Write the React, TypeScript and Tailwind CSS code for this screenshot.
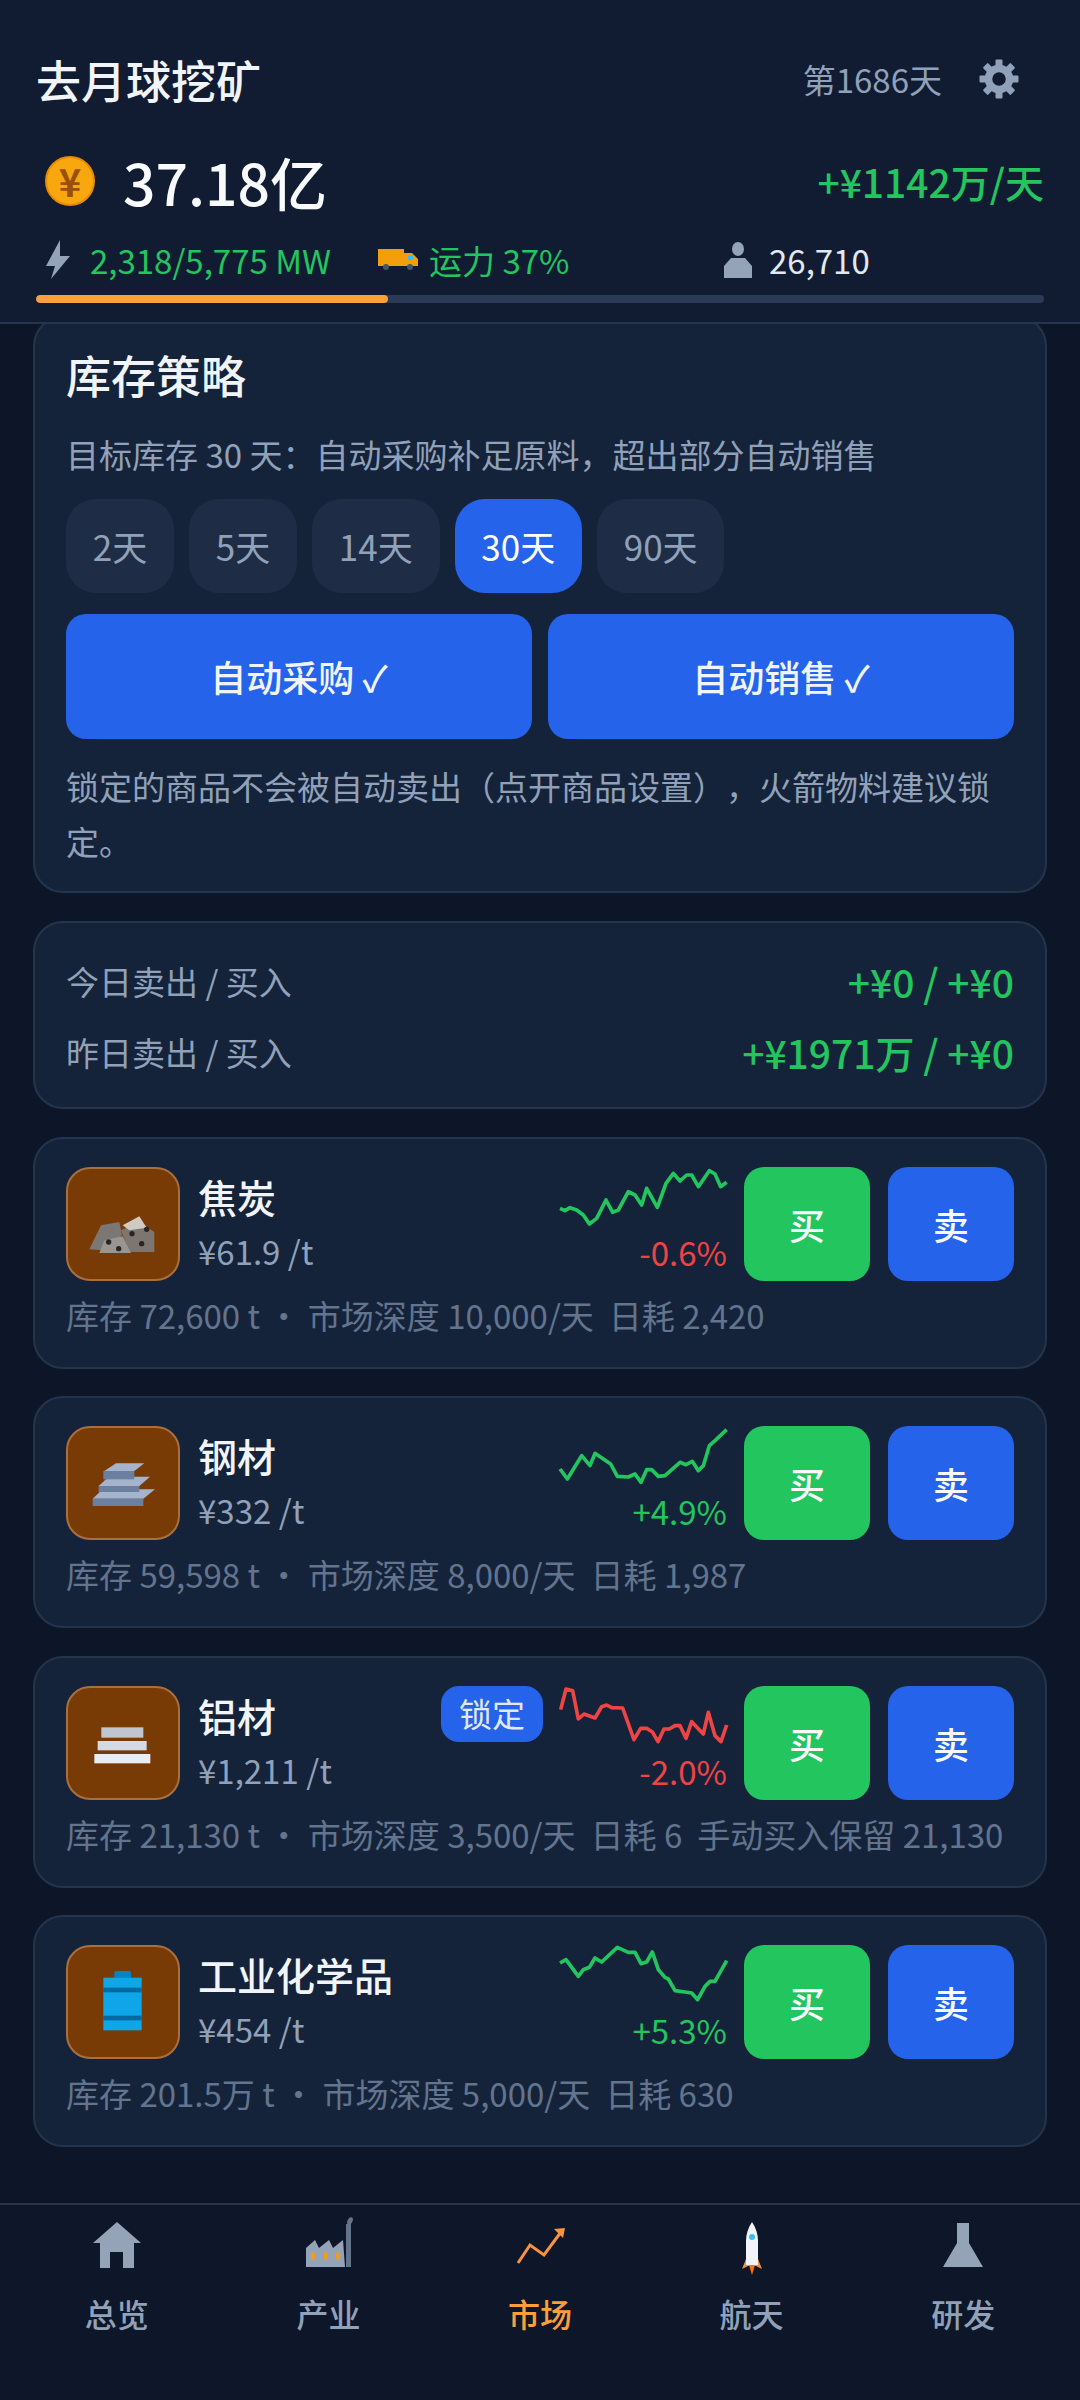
import React from 'react';

const FONT = "font-['Noto_Sans_CJK_SC','Noto_Sans',sans-serif]";

// sparkline points are in 3x px, same box on every card
const SPARK_UP_1 = '60,175 75,182 90,173 110,180 130,195 148,222 170,205 198,150 218,187 235,180 265,125 285,135 305,165 320,115 352,172 378,100 400,70 420,93 440,75 455,75 475,110 508,62 525,72 542,110 560,97';
const SPARK_UP_2 = '60,180 82,210 125,140 150,170 165,133 190,150 212,165 232,202 265,204 285,195 303,220 320,182 335,182 355,202 375,200 420,160 438,167 457,157 475,185 490,170 508,110 525,95 560,62';
const SPARK_DOWN = '62,122 78,60 98,65 115,150 132,135 165,147 185,113 200,108 215,116 248,117 282,212 302,178 320,178 338,190 354,218 372,180 388,180 405,170 420,170 438,208 455,158 490,195 505,130 525,200 543,218 560,168';
const SPARK_UP_3 = '60,105 78,95 115,145 130,125 148,118 165,90 185,102 232,58 265,73 285,73 303,107 320,102 337,72 355,125 375,148 385,153 405,188 435,192 455,195 473,215 495,175 510,160 525,160 560,98';

const CoalIcon = () => (
  <svg width="114" height="114" viewBox="80 50 342 342">
    <polygon points="150,297 185,225 240,215 248,255 190,300" fill="#7a7774" />
    <polygon points="245,240 300,215 345,245 345,305 270,305" fill="#7d7670" />
    <polygon points="180,308 195,270 250,258 275,308" fill="#9a9590" />
    <polygon points="250,225 300,198 322,232 270,240" fill="#cfcac4" />
    <circle cx="208" cy="275" r="8" fill="#292524" />
    <circle cx="238" cy="295" r="8" fill="#292524" />
    <circle cx="278" cy="250" r="8" fill="#292524" />
    <circle cx="322" cy="237" r="8" fill="#292524" />
    <circle cx="307" cy="280" r="8" fill="#292524" />
  </svg>
);

const SteelIcon = () => (
  <svg width="114" height="114" viewBox="80 50 342 342">
    <polygon points="160,268 190,240 347,240 312,268" fill="#a5b4cc" />
    <rect x="160" y="268" width="152" height="22" fill="#6b7f9e" />
    <polygon points="178,230 208,202 332,202 300,230" fill="#a5b4cc" />
    <rect x="178" y="230" width="122" height="18" fill="#6b7f9e" />
    <polygon points="195,185 230,162 315,162 285,185" fill="#a5b4cc" />
    <rect x="192" y="185" width="93" height="25" fill="#6b7f9e" />
  </svg>
);

const AluminumIcon = () => (
  <svg width="114" height="114" viewBox="80 50 342 342">
    <rect x="186" y="174" width="126" height="31" fill="#c0c6d0" />
    <rect x="175" y="215" width="147" height="28" fill="#d3dae3" />
    <rect x="165" y="254" width="168" height="28" fill="#e8edf3" />
  </svg>
);

const ChemIcon = () => (
  <svg width="114" height="114" viewBox="80 50 342 342">
    <rect x="225" y="128" width="50" height="30" rx="6" fill="#0284c7" />
    <rect x="192" y="148" width="115" height="158" fill="#0ea5e9" />
    <rect x="192" y="178" width="115" height="14" fill="#0369a1" />
    <rect x="192" y="262" width="115" height="14" fill="#0369a1" />
  </svg>
);

const GearIcon = () => (
  <svg width="40" height="40" viewBox="0 0 40 40" className="text-slate-400">
    <circle cx="20" cy="20" r="10.5" fill="none" stroke="currentColor" strokeWidth="7.5" />
    {[0, 45, 90, 135, 180, 225, 270, 315].map((deg) => (
      <rect key={deg} x="16.5" y="0.5" width="7" height="8" rx="1" fill="currentColor" transform={`rotate(${deg} 20 20)`} />
    ))}
  </svg>
);

const HouseIcon = () => (
  <svg width="60" height="60" viewBox="0 0 60 60">
    <path d="M30 7 L54 28 H47 V53 H36 V37 H23 V53 H13 V28 H6 Z" fill="#94a3b8" />
  </svg>
);

const FactoryIcon = () => (
  <svg width="60" height="60" viewBox="0 0 60 60">
    <path d="M8 52 V33 L17 25 L21 33 L31 25 L35 33 L45 25 L47 52 Z" fill="#94a3b8" />
    <rect x="48" y="9" width="5" height="43" fill="#64748b" />
    <ellipse cx="52" cy="6" rx="2.5" ry="4" fill="#64748b" transform="rotate(25 52 6)" />
    <ellipse cx="15" cy="41" rx="2" ry="4" fill="#f59e0b" />
    <ellipse cx="28" cy="41" rx="2" ry="4" fill="#f59e0b" />
    <ellipse cx="40" cy="41" rx="2" ry="4" fill="#f59e0b" />
  </svg>
);

const ChartIcon = () => (
  <svg width="60" height="60" viewBox="0 0 60 60">
    <polyline points="8,48 20,30 34,40 51,17" fill="none" stroke="#fb923c" strokeWidth="3" />
    <polygon points="44,14 55,13 53,23" fill="#fb923c" />
  </svg>
);

const RocketIcon = () => (
  <svg width="60" height="60" viewBox="0 0 60 60">
    <polygon points="24,44 20,54 26,51 34,51 40,54 36,44" fill="#fb923c" />
    <polygon points="27,50 33,50 30,60" fill="#f97316" />
    <path d="M30 7 C34 13 36 19 36 26 V50 H24 V26 C24 19 26 13 30 7 Z" fill="#f1f5f9" />
    <circle cx="30" cy="22" r="3" fill="#38bdf8" />
  </svg>
);

const FlaskIcon = () => (
  <svg width="60" height="60" viewBox="0 0 60 60">
    <polygon points="24,8 36,8 36,28 50,52 10,52 24,28" fill="#94a3b8" />
  </svg>
);

const goods = [
  { name: '焦炭', price: '¥61.9 /t', pct: '-0.6%', up: false, spark: SPARK_UP_1, line: '#22c55e', icon: <CoalIcon />, stock: '库存 72,600 t ・ 市场深度 10,000/天', extras: ['日耗 2,420'] },
  { name: '钢材', price: '¥332 /t', pct: '+4.9%', up: true, spark: SPARK_UP_2, line: '#22c55e', icon: <SteelIcon />, stock: '库存 59,598 t ・ 市场深度 8,000/天', extras: ['日耗 1,987'] },
  { name: '铝材', price: '¥1,211 /t', pct: '-2.0%', up: false, spark: SPARK_DOWN, line: '#ef4444', icon: <AluminumIcon />, locked: true, stock: '库存 21,130 t ・ 市场深度 3,500/天', extras: ['日耗 6', '手动买入保留 21,130'] },
  { name: '工业化学品', price: '¥454 /t', pct: '+5.3%', up: true, spark: SPARK_UP_3, line: '#22c55e', icon: <ChemIcon />, stock: '库存 201.5万 t ・ 市场深度 5,000/天', extras: ['日耗 630'] },
];

const days = [
  { label: '2天', active: false },
  { label: '5天', active: false },
  { label: '14天', active: false },
  { label: '30天', active: true },
  { label: '90天', active: false },
];

const tabs = [
  { label: '总览', icon: <HouseIcon />, active: false },
  { label: '产业', icon: <FactoryIcon />, active: false },
  { label: '市场', icon: <ChartIcon />, active: true },
  { label: '航天', icon: <RocketIcon />, active: false },
  { label: '研发', icon: <FlaskIcon />, active: false },
];

const Header = () => (
  <header className="h-[324px] shrink-0 border-b-2 border-[#25344d] bg-[#111c33] px-[36px] pt-[50px]">
    <div className="flex h-[60px] items-center justify-between">
      <h1 className="text-[45px] leading-[60px] font-medium text-[#f1f5f9]">去月球挖矿</h1>
      <div className="flex items-center pb-[3px]">
        <span className="text-[33px] leading-[44px] text-slate-400">第1686天</span>
        <span className="mr-[25px] ml-[37px] flex"><GearIcon /></span>
      </div>
    </div>
    <div className="mt-[31px] flex h-[80px] items-center justify-between">
      <div className="flex items-center">
        <span className="ml-[9px] flex h-[50px] w-[50px] items-center justify-center rounded-full border-2 border-[#e88a00] bg-[#f8a70f] text-[38px] leading-none font-bold text-[#9a4f0a]">¥</span>
        <span className="ml-[28px] text-[57px] leading-[80px] font-medium text-[#f8fafc]">37.18亿</span>
      </div>
      <span className="text-[39px] leading-[56px] font-medium text-[#22c55e]">+¥1142万/天</span>
    </div>
    <div className="mt-[17px] flex h-[44px] items-center text-[33px] leading-[44px]">
      <div className="flex w-[342px] items-center text-[#22c55e]">
        <svg width="34" height="40" viewBox="0 0 34 40" className="mr-[16px] ml-[4px] shrink-0">
          <polygon points="20,0 6,26 15,26 11,39 30,16 20,16" fill="#94a3b8" />
        </svg>
        2,318/5,775 MW
      </div>
      <div className="flex w-[346px] items-center text-[#22c55e]">
        <svg width="40" height="22" viewBox="0 0 40 22" className="mr-[11px] shrink-0">
          <rect x="0" y="0" width="26" height="17" fill="#f59e0b" />
          <path d="M26 4 H34 L40 10 V17 H26 Z" fill="#f59e0b" />
          <rect x="30" y="6" width="5" height="5" fill="#38bdf8" />
          <circle cx="8" cy="18" r="3" fill="#475569" />
          <circle cx="32" cy="18" r="3" fill="#475569" />
        </svg>
        运力 37%
      </div>
      <div className="flex items-center text-[#e2e8f0]">
        <svg width="28" height="36" viewBox="0 0 28 36" className="mr-[17px] shrink-0">
          <ellipse cx="14" cy="7" rx="6" ry="7" fill="#94a3b8" />
          <path d="M7 16 H21 L28 24 V36 H0 V24 Z" fill="#94a3b8" />
        </svg>
        26,710
      </div>
    </div>
    <div className="mt-[13px] h-[8px] overflow-hidden rounded-full bg-[#2a3a57]">
      <div className="h-full w-[352px] rounded-full bg-[#fb9f3c]" />
    </div>
  </header>
);

const StrategyCard = () => (
  <section className="-mt-[8px] rounded-[30px] border-2 border-[#25344d] bg-[#15233a] px-[31px] pt-[27px] pb-[22px]">
    <h2 className="text-[45px] leading-[60px] font-medium text-[#f1f5f9]">库存策略</h2>
    <p className="mt-[27px] text-[33px] leading-[44px] text-slate-400">目标库存 30 天：自动采购补足原料，超出部分自动销售</p>
    <div className="mt-[23px] flex gap-[15px]">
      {days.map((d) => (
        <button
          key={d.label}
          className={`h-[94px] rounded-[30px] px-[26.8px] text-[35px] ${d.active ? 'bg-[#2563eb] text-white' : 'bg-[#1e2d45] text-slate-400'}`}
        >
          {d.label}
        </button>
      ))}
    </div>
    <div className="mt-[21px] grid grid-cols-2 gap-[16px]">
      <button className="h-[125px] rounded-[20px] bg-[#2563eb] pb-[2px] text-[36px] font-medium text-[#f1f5f9]">自动采购 ✓</button>
      <button className="h-[125px] rounded-[20px] bg-[#2563eb] pb-[2px] text-[36px] font-medium text-[#f1f5f9]">自动销售 ✓</button>
    </div>
    <p className="mt-[20px] text-[33px] leading-[55px] text-slate-400">锁定的商品不会被自动卖出（点开商品设置），火箭物料建议锁定。</p>
  </section>
);

const TradeCard = () => (
  <section className="mt-[28px] rounded-[30px] border-2 border-[#25344d] bg-[#15233a] px-[31px] pt-[29px] pb-[24px]">
    <div className="flex h-[60px] items-center justify-between">
      <span className="text-[33px] text-slate-400">今日卖出 / 买入</span>
      <span className="pb-[2px] text-[39px] font-medium text-[#22c55e]">+¥0 / +¥0</span>
    </div>
    <div className="mt-[11px] flex h-[60px] items-center justify-between">
      <span className="text-[33px] text-slate-400">昨日卖出 / 买入</span>
      <span className="pb-[2px] text-[39px] font-medium text-[#22c55e]">+¥1971万 / +¥0</span>
    </div>
  </section>
);

const GoodCard = ({ good }: { good: (typeof goods)[number] }) => (
  <section className="mt-[27.6px] rounded-[30px] border-2 border-[#25344d] bg-[#15233a] px-[31px] pt-[28px] pb-[30px]">
    <div className="flex h-[114px]">
      <div className="flex h-[114px] w-[114px] shrink-0 items-center justify-center rounded-[24px] border-2 border-[#a8703f] bg-[#793b05]">
        <span className="flex shrink-0">{good.icon}</span>
      </div>
      <div className="ml-[18px] flex flex-1 justify-between">
        <div className="pt-[4px]">
          <div className="text-[39px] leading-[50px] font-medium text-[#f1f5f9]">{good.name}</div>
          <div className="mt-[8px] text-[33px] leading-[44px] text-slate-400">{good.price}</div>
        </div>
        {good.locked && (
          <span className="mr-[15px] flex h-[56px] w-[102px] items-center justify-center rounded-[18px] bg-[#2563eb] text-[33px] text-[#e2e8f0]">锁定</span>
        )}
      </div>
      <div className="w-[172px] shrink-0">
        <svg width="172" height="63" viewBox="54 51 516 189" className="block">
          <polyline points={good.spark} fill="none" stroke={good.line} strokeWidth="11" strokeLinejoin="round" />
        </svg>
        <div className={`pr-[3px] text-right text-[33px] leading-[44px] ${good.up ? 'text-[#22c55e]' : 'text-[#ef4444]'}`}>{good.pct}</div>
      </div>
      <button className="ml-[14px] h-[114px] w-[126px] shrink-0 rounded-[20px] bg-[#22c55e] text-[36px] font-medium text-[#f8fafc]">买</button>
      <button className="ml-[18px] h-[114px] w-[126px] shrink-0 rounded-[20px] bg-[#2563eb] text-[36px] font-medium text-[#f8fafc]">卖</button>
    </div>
    <div className="mt-[12px] flex gap-[15px] text-[33px] leading-[44px] whitespace-nowrap text-slate-500">
      <span>{good.stock}</span>
      {good.extras.map((e) => (
        <span key={e}>{e}</span>
      ))}
    </div>
  </section>
);

const BottomNav = () => (
  <nav className="grid h-[197px] shrink-0 grid-cols-5 border-t-2 border-[#25344d] bg-[#0e1729] pt-[10px] pr-[11px] pl-[11px]">
    {tabs.map((t) => (
      <div key={t.label} className="flex flex-col items-center">
        {t.icon}
        <span className={`mt-[16px] text-[32px] leading-[44px] font-medium ${t.active ? 'text-[#fb9f3c]' : 'text-slate-400'}`}>{t.label}</span>
      </div>
    ))}
  </nav>
);

export default function App() {
  return (
    <div className={`flex h-[2400px] w-[1080px] flex-col overflow-hidden bg-[#0c1628] [text-spacing-trim:space-all] ${FONT}`}>
      <Header />
      <main className="flex-1 overflow-hidden px-[33px]">
        <StrategyCard />
        <TradeCard />
        {goods.map((g) => (
          <GoodCard key={g.name} good={g} />
        ))}
      </main>
      <BottomNav />
    </div>
  );
}
